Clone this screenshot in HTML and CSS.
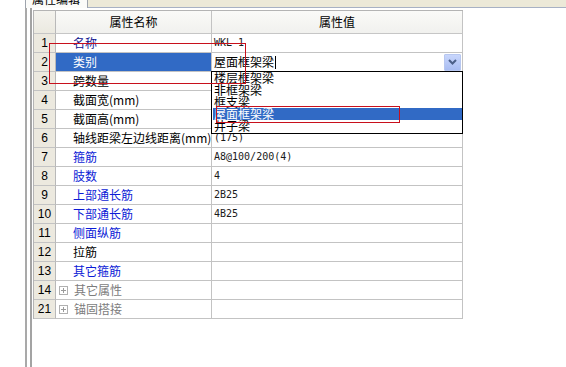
FILE: index.html
```html
<!DOCTYPE html>
<html lang="zh">
<head>
<meta charset="utf-8">
<title>属性编辑</title>
<link rel="stylesheet" href="styles.css">
</head>
<body>
<div class="app">
  <div class="tabstrip">
    <div class="tab"><span class="tab-label">属性编辑</span></div>
  </div>
  <div class="body">
    <div class="frame">
      <div class="frame-inner">
        <div class="grid">
          <div class="cell hd num"></div>
          <div class="cell hd">属性名称</div>
          <div class="cell hd">属性值</div>

          <div class="cell num">1</div>
          <div class="cell name blue dark">名称</div>
          <div class="cell val">WKL-1</div>

          <div class="cell num">2</div>
          <div class="cell name selected">类别</div>
          <div class="cell val editing">
            <span class="edit-text">屋面框架梁</span><span class="caret"></span>
            <span class="drop-btn"><svg width="9" height="6" viewBox="0 0 9 6"><path d="M1 1 L4.5 4.5 L8 1" fill="none" stroke="#4b5f88" stroke-width="2"/></svg></span>
          </div>

          <div class="cell num">3</div>
          <div class="cell name">跨数量</div>
          <div class="cell val"></div>

          <div class="cell num">4</div>
          <div class="cell name">截面宽(mm)</div>
          <div class="cell val"></div>

          <div class="cell num">5</div>
          <div class="cell name">截面高(mm)</div>
          <div class="cell val"></div>

          <div class="cell num">6</div>
          <div class="cell name">轴线距梁左边线距离(mm)</div>
          <div class="cell val">(175)</div>

          <div class="cell num">7</div>
          <div class="cell name blue">箍筋</div>
          <div class="cell val">A8@100/200(4)</div>

          <div class="cell num">8</div>
          <div class="cell name blue">肢数</div>
          <div class="cell val">4</div>

          <div class="cell num">9</div>
          <div class="cell name blue">上部通长筋</div>
          <div class="cell val">2B25</div>

          <div class="cell num">10</div>
          <div class="cell name blue">下部通长筋</div>
          <div class="cell val">4B25</div>

          <div class="cell num">11</div>
          <div class="cell name blue">侧面纵筋</div>
          <div class="cell val"></div>

          <div class="cell num">12</div>
          <div class="cell name">拉筋</div>
          <div class="cell val"></div>

          <div class="cell num">13</div>
          <div class="cell name blue">其它箍筋</div>
          <div class="cell val"></div>

          <div class="cell num">14</div>
          <div class="cell name group"><span class="plus"></span>其它属性</div>
          <div class="cell val"></div>

          <div class="cell num">21</div>
          <div class="cell name group"><span class="plus"></span>锚固搭接</div>
          <div class="cell val"></div>
        </div>
      </div>
    </div>
  </div>

  <ul class="dropdown">
    <li>楼层框架梁</li>
    <li>非框架梁</li>
    <li>框支梁</li>
    <li class="active">屋面框架梁</li>
    <li>井子梁</li>
  </ul>

  <div class="mark mark-a"></div>
  <div class="mark mark-b"></div>
</div>
</body>
</html>
```
FILE: styles.css
```css
html, body {
  margin: 0;
  padding: 0;
  background: #fff;
}

.app {
  position: relative;
  width: 566px;
  height: 367px;
  overflow: hidden;
  background: #fff;
  font-family: "Noto Sans CJK SC", "Liberation Sans", sans-serif;
  font-size: 12px;
  color: #000;
}

.tabstrip {
  margin-left: 25px;
  height: 7px;
  background: #ece9d8;
  border-bottom: 1px solid #a7b1c4;
  display: flex;
}

.tab {
  width: 63px;
  height: 8px;
  background: #fbfbf9;
  border-left: 1px solid #9ea4ad;
  border-right: 1px solid #9ea4ad;
  overflow: hidden;
  padding-left: 6px;
  box-sizing: border-box;
}

.tab-label {
  display: block;
  margin-top: -9px;
  line-height: 16px;
  color: #000;
}

.body {
  display: flex;
  height: 359px;
}

.frame {
  margin-left: 25px;
  border-left: 2px solid #a9a9a9;
  padding-left: 3px;
}

.frame-inner {
  height: 100%;
  border-left: 2px solid #a3a3a3;
  padding-left: 1px;
  padding-top: 2px;
  box-sizing: border-box;
}

.grid {
  display: grid;
  grid-template-columns: 22px 156px 251px;
  border-left: 1px solid #b4b4b4;
  border-top: 1px solid #b4b4b4;
  width: max-content;
}

.cell {
  box-sizing: border-box;
  height: 19px;
  border-right: 1px solid #c3c3c3;
  border-bottom: 1px solid #c3c3c3;
  line-height: 18px;
  white-space: nowrap;
  overflow: hidden;
}

.cell.hd {
  height: 23px;
  line-height: 22px;
  text-align: center;
  background: linear-gradient(#fafaf8, #f1f1ee);
  border-bottom-color: #c6c6c6;
}

.cell.num {
  text-align: center;
  background: #ece9df;
  font-family: "Liberation Sans", sans-serif;
  font-size: 12px;
  border-right-color: #b9b9b9;
}

.cell.hd.num {
  background: linear-gradient(#f4f3ee, #ebe9e0);
}

.cell.name {
  padding-left: 17px;
}

.cell.name.blue {
  color: #0b1bd6;
}

.cell.name.dark {
  color: #10148f;
}

.cell.name.selected {
  background: #316ac5;
  color: #fff;
}

.cell.name.group {
  padding-left: 3px;
  color: #7d7d7d;
  display: flex;
  align-items: center;
}

.plus {
  position: relative;
  width: 7px;
  height: 7px;
  border: 1px solid #b0b0b0;
  margin-right: 6px;
  flex: none;
}

.plus::before,
.plus::after {
  content: "";
  position: absolute;
  background: #9a9a9a;
}

.plus::before {
  left: 1px;
  right: 1px;
  top: 3px;
  height: 1px;
}

.plus::after {
  top: 1px;
  bottom: 1px;
  left: 3px;
  width: 1px;
}

.cell.val {
  padding-left: 2px;
  font-family: "DejaVu Sans Mono", "Liberation Mono", monospace;
  font-size: 10px;
  color: #1a1a1a;
}

.cell.val.editing {
  display: flex;
  align-items: center;
  font-family: "Noto Sans CJK SC", sans-serif;
  font-size: 12px;
  color: #000;
  padding-right: 1px;
}

.caret {
  width: 1px;
  height: 13px;
  background: #000;
  margin-left: 1px;
}

.drop-btn {
  margin-left: auto;
  width: 17px;
  height: 17px;
  box-sizing: border-box;
  border: 1px solid #b7c7f0;
  border-radius: 1px;
  background: linear-gradient(#c8d6fc, #a9bdf2);
  display: flex;
  align-items: center;
  justify-content: center;
}

.dropdown {
  position: absolute;
  left: 211px;
  top: 71px;
  width: 252px;
  height: 63px;
  margin: 0;
  padding: 0;
  list-style: none;
  box-sizing: border-box;
  border: 1px solid #000;
  background: #fff;
  overflow: hidden;
}

.dropdown li {
  height: 12px;
  line-height: 12px;
  margin-left: 1px;
  padding-left: 1px;
  font-size: 12px;
  white-space: nowrap;
}

.dropdown li.active {
  background: #316ac5;
  color: #fff;
}

.mark {
  position: absolute;
  border: 1px solid #c8101c;
  box-sizing: border-box;
}

.mark-a {
  left: 49px;
  top: 43px;
  width: 197px;
  height: 41px;
}

.mark-b {
  left: 216px;
  top: 106px;
  width: 184px;
  height: 17px;
}
```
